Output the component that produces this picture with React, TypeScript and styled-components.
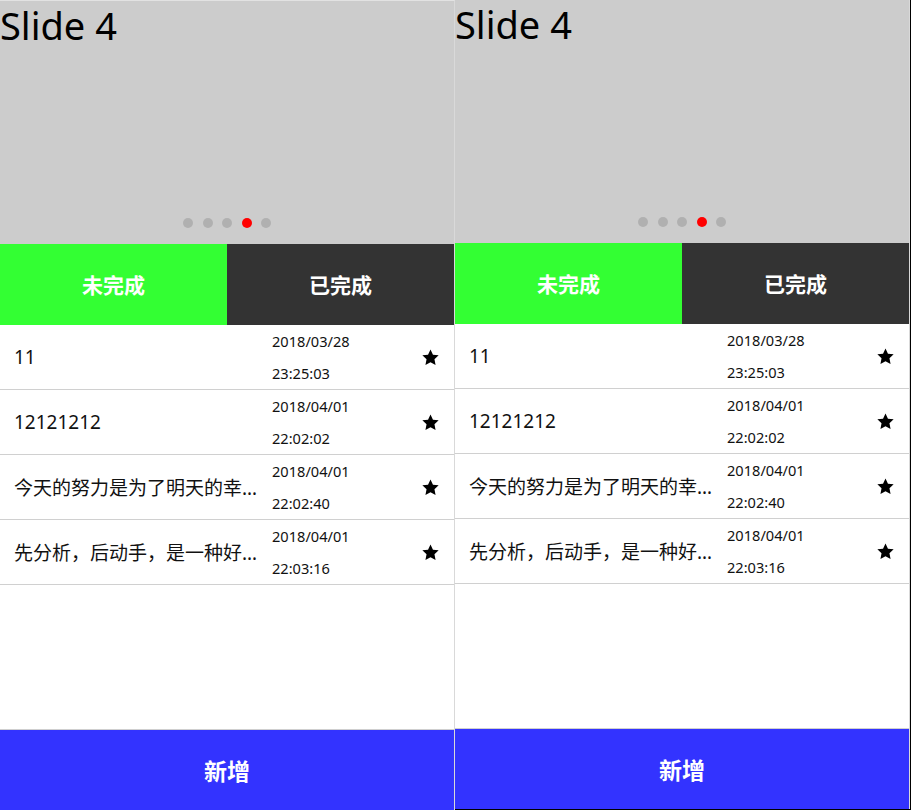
import React from "react";
import styled, { createGlobalStyle } from "styled-components";

const Global = createGlobalStyle`
  html, body { margin: 0; padding: 0; background: #fff; }
  body { font-family: "Noto Sans", "Noto Sans CJK SC", sans-serif; overflow: hidden; }
`;

const Stage = styled.div`
  display: flex;
  align-items: flex-start;
  width: 911px;
  height: 810px;
  overflow: hidden;
`;

const Frame = styled.div<{ $edge?: boolean }>`
  display: flex;
  flex-direction: column;
  border-right: ${(p) => (p.$edge ? "1px solid #000" : "none")};
  border-bottom: ${(p) => (p.$edge ? "1px solid #000" : "none")};
`;

const Phone = styled.div<{ $topLine?: boolean }>`
  display: flex;
  flex-direction: column;
  width: 454px;
  border-top: ${(p) => (p.$topLine ? "1px solid #e2e2e2" : "none")};
  border-right: 1px solid #d9d9d9;
  background: #fff;
`;

const Slide = styled.div`
  position: relative;
  height: 243px;
  background: #cccccc;
  padding-top: 5px;
  box-sizing: border-box;
`;

const SlideTitle = styled.div`
  font-size: 38px;
  line-height: 1;
  color: #000;
  white-space: nowrap;
`;

const Dots = styled.div`
  position: absolute;
  left: 0;
  right: 0;
  bottom: 16px;
  display: flex;
  justify-content: center;
  gap: 9.5px;
`;

const Dot = styled.span<{ $active?: boolean }>`
  width: 10px;
  height: 10px;
  border-radius: 50%;
  background: ${(p) => (p.$active ? "#ff0000" : "#b0b0b0")};
`;

const Tabs = styled.div`
  display: grid;
  grid-template-columns: 227px 227px;
  height: 81px;
`;

const Tab = styled.div<{ $active?: boolean }>`
  display: flex;
  align-items: center;
  justify-content: center;
  background: ${(p) => (p.$active ? "#33ff33" : "#333333")};
  color: #fff;
  font-family: "Noto Sans CJK SC", sans-serif;
  font-weight: 700;
  font-size: 21px;
  padding-bottom: 1px;
`;

const List = styled.div`
  height: 404px;
  display: flex;
  flex-direction: column;
`;

const Row = styled.div`
  display: flex;
  align-items: center;
  height: 64px;
  padding: 0 14px 0 14px;
  border-bottom: 1px solid #d0d0d0;
  flex-shrink: 0;
`;

const Title = styled.div`
  flex: 0 0 254px;
  margin-right: 4px;
  font-size: 19px;
  color: #111;
  white-space: nowrap;
  overflow: hidden;
  text-overflow: ellipsis;
`;

const DateCol = styled.div`
  flex: 1;
  display: flex;
  flex-direction: column;
  font-size: 14.6px;
  line-height: 32px;
  color: #111;
`;

const Star = styled.svg`
  width: 19px;
  height: 19px;
  flex-shrink: 0;
`;

const Footer = styled.div`
  height: 80px;
  border-top: 1px solid #cfcfcf;
  background: #3333ff;
  color: #fff;
  display: flex;
  align-items: center;
  justify-content: center;
  font-family: "Noto Sans CJK SC", sans-serif;
  font-weight: 700;
  font-size: 23px;
`;

const items = [
  { title: "11", date: "2018/03/28", time: "23:25:03" },
  { title: "12121212", date: "2018/04/01", time: "22:02:02" },
  { title: "今天的努力是为了明天的幸福生活", date: "2018/04/01", time: "22:02:40" },
  { title: "先分析，后动手，是一种好习惯", date: "2018/04/01", time: "22:03:16" },
];

const StarIcon = () => (
  <Star viewBox="0 0 24 24">
    <path
      d="M12 1.8l3.1 6.6 7.2.9-5.3 5 1.4 7.1L12 17.9l-6.4 3.5 1.4-7.1-5.3-5 7.2-.9z"
      fill="#000"
    />
  </Star>
);

const Screen: React.FC<{ topLine?: boolean }> = ({ topLine }) => (
  <Phone $topLine={topLine}>
    <Slide>
      <SlideTitle>Slide 4</SlideTitle>
      <Dots>
        {[0, 1, 2, 3, 4].map((i) => (
          <Dot key={i} $active={i === 3} />
        ))}
      </Dots>
    </Slide>
    <Tabs>
      <Tab $active>未完成</Tab>
      <Tab>已完成</Tab>
    </Tabs>
    <List>
      {items.map((it) => (
        <Row key={it.time}>
          <Title>{it.title}</Title>
          <DateCol>
            <span>{it.date}</span>
            <span>{it.time}</span>
          </DateCol>
          <StarIcon />
        </Row>
      ))}
    </List>
    <Footer>新增</Footer>
  </Phone>
);

export default function App() {
  return (
    <Stage>
      <Global />
      <Frame>
        <Screen topLine />
      </Frame>
      <Frame $edge>
        <Screen />
      </Frame>
    </Stage>
  );
}
